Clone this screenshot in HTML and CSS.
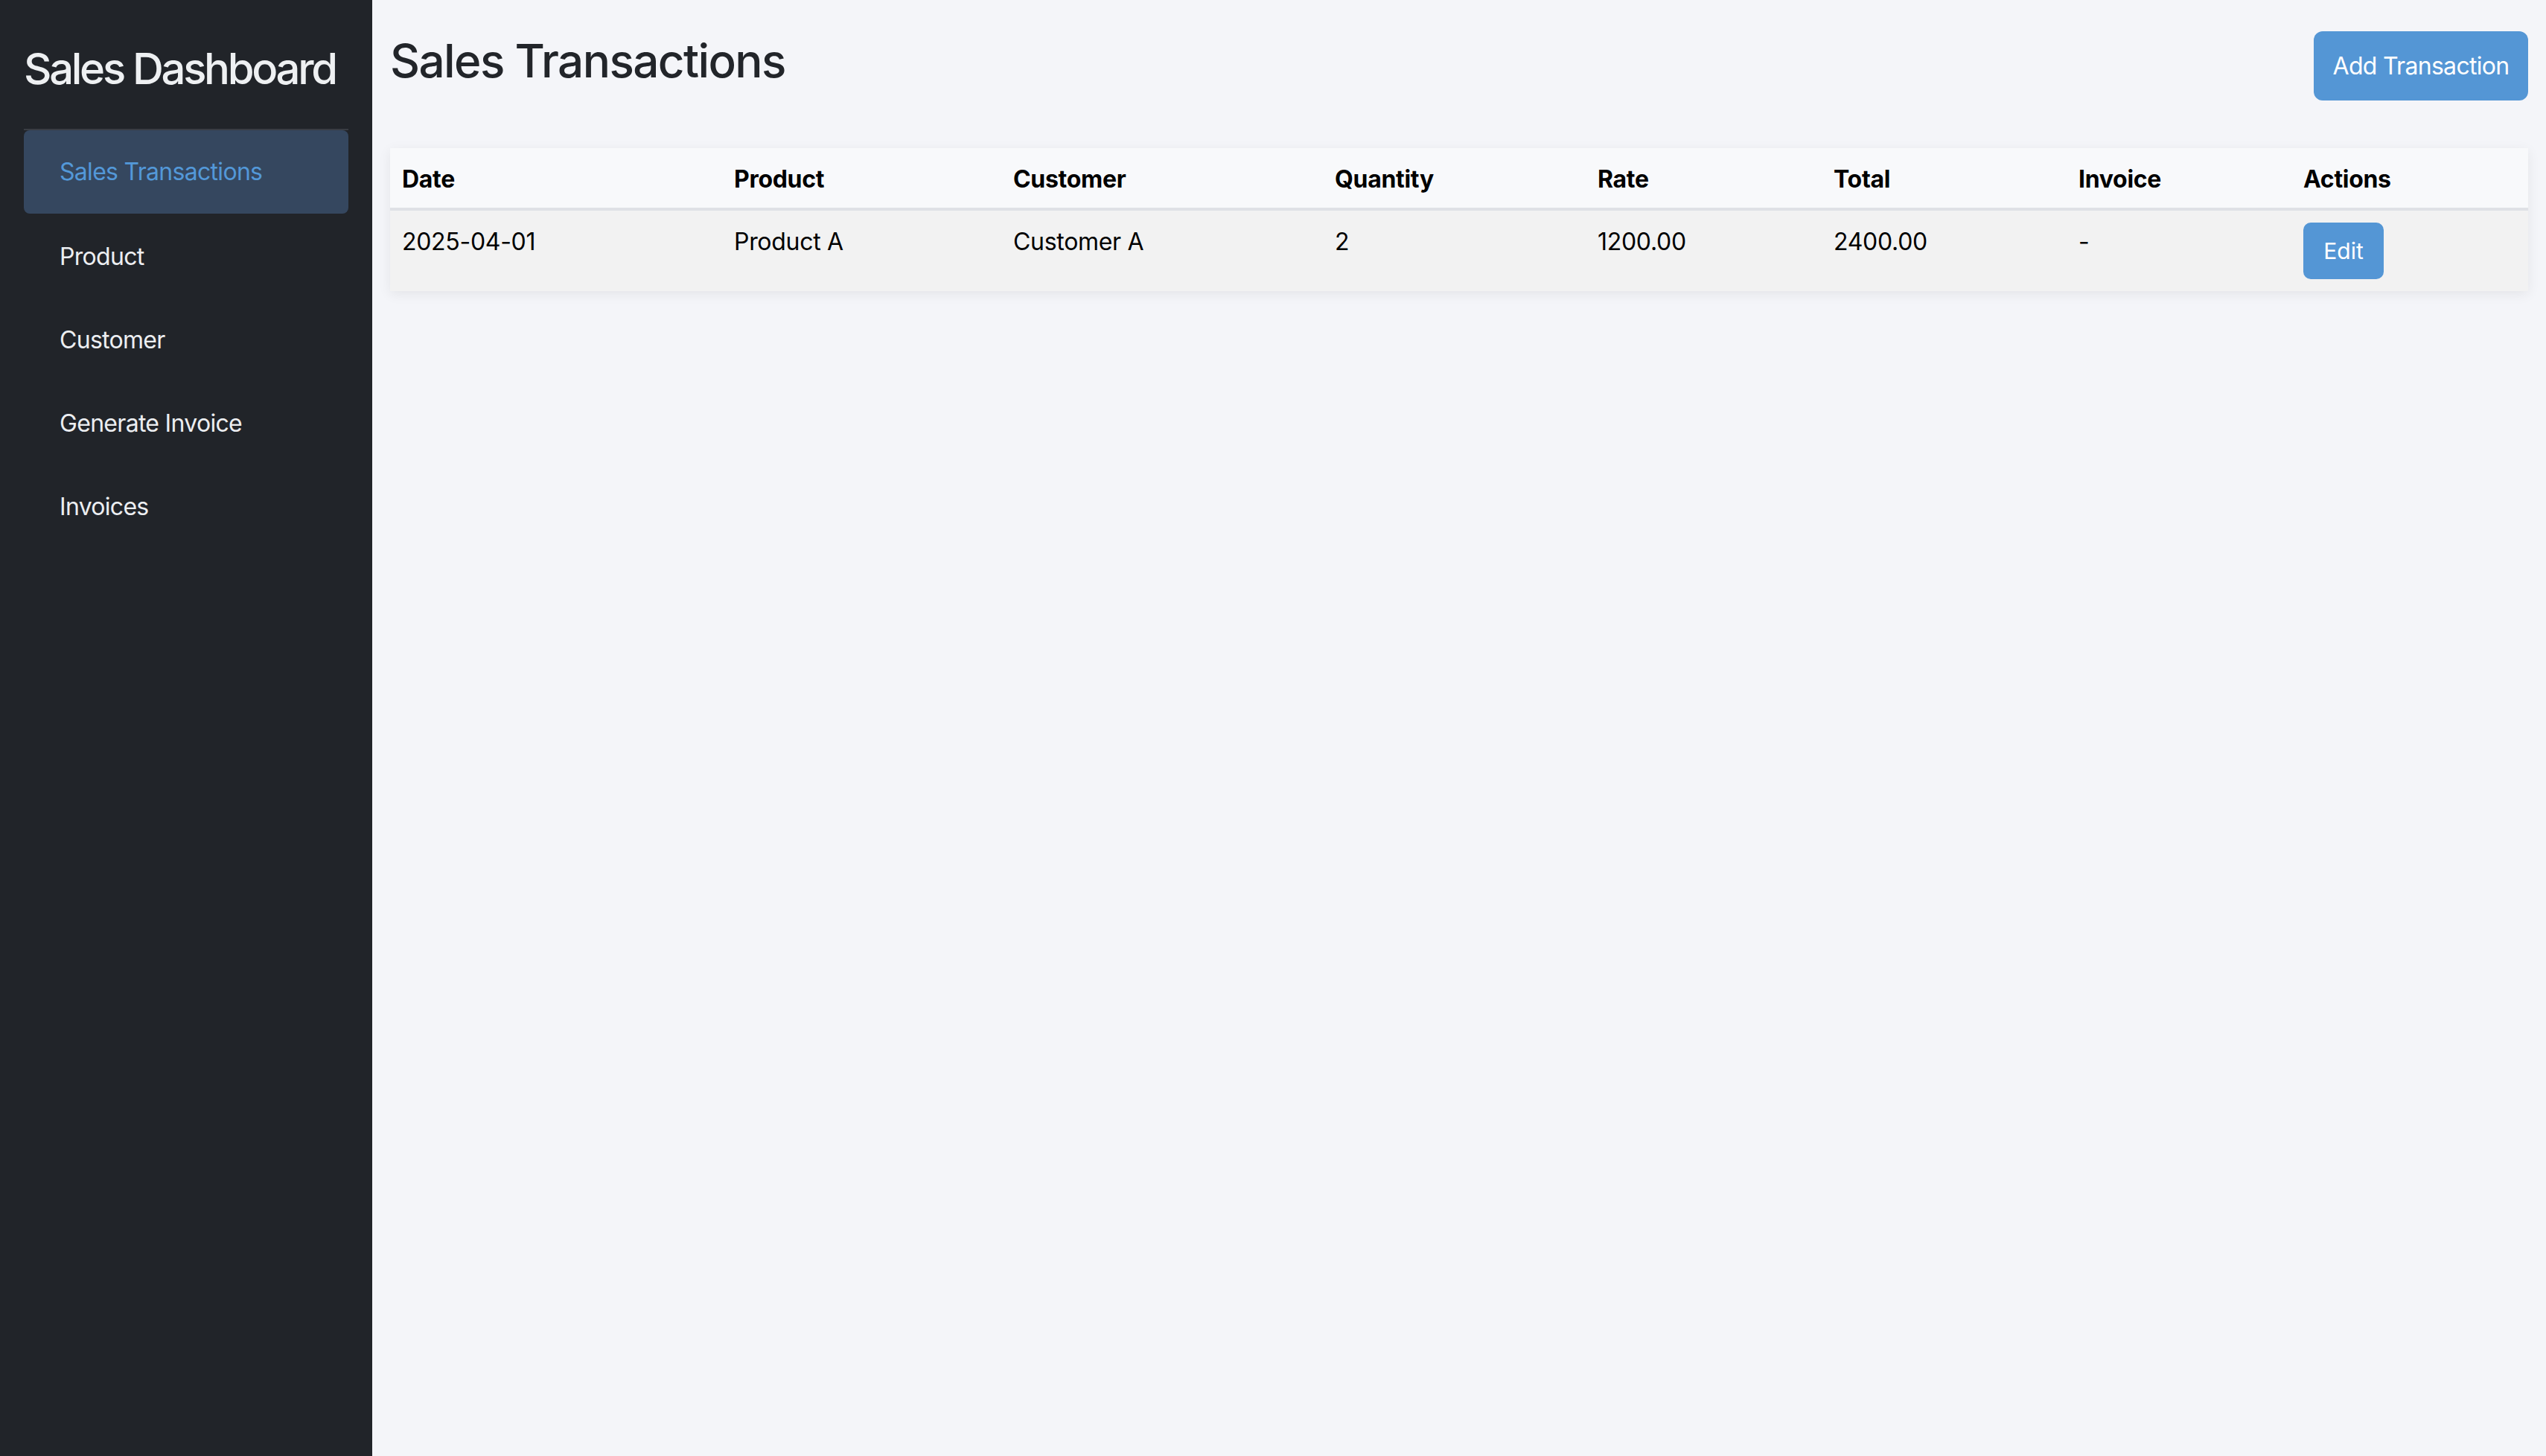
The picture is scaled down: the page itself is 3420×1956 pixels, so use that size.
FILE: index.html
```html
<!DOCTYPE html>
<html lang="en">
<head>
<meta charset="utf-8">
<title>Sales Dashboard</title>
<link rel="stylesheet" href="styles.css">
</head>
<body>
<div class="app">
  <aside class="sidebar">
    <h2 class="brand">Sales Dashboard</h2>
    <ul class="nav">
      <li class="nav-item active">Sales Transactions</li>
      <li class="nav-item">Product</li>
      <li class="nav-item">Customer</li>
      <li class="nav-item">Generate Invoice</li>
      <li class="nav-item">Invoices</li>
    </ul>
  </aside>
  <main class="main">
    <div class="page-header">
      <h1 class="page-title">Sales Transactions</h1>
      <button class="btn btn-add">Add Transaction</button>
    </div>
    <table class="tx-table">
      <colgroup>
        <col class="c-date"><col class="c-product"><col class="c-customer"><col class="c-qty">
        <col class="c-rate"><col class="c-total"><col class="c-invoice"><col class="c-actions">
      </colgroup>
      <thead>
        <tr>
          <th>Date</th><th>Product</th><th>Customer</th><th>Quantity</th>
          <th>Rate</th><th>Total</th><th>Invoice</th><th>Actions</th>
        </tr>
      </thead>
      <tbody>
        <tr>
          <td>2025-04-01</td><td>Product A</td><td>Customer A</td><td>2</td>
          <td>1200.00</td><td>2400.00</td><td>-</td>
          <td class="actions"><button class="btn btn-edit">Edit</button></td>
        </tr>
      </tbody>
    </table>
  </main>
</div>
</body>
</html>
```
FILE: styles.css
```css
html, body {
  margin: 0;
  padding: 0;
}
body {
  font-family: Inter, "Noto Sans", "Liberation Sans", sans-serif;
  background: #f4f5f9;
  color: #000;
}
.app {
  display: flex;
  min-height: 1956px;
}
.sidebar {
  width: 500px;
  flex: 0 0 500px;
  box-sizing: border-box;
  background: #212429;
  padding: 32px;
}
.brand {
  margin: 24px 0 45px 0;
  font-size: 58px;
  font-weight: 500;
  line-height: 72px;
  letter-spacing: -3.3px;
  color: #eef0f2;
  white-space: nowrap;
}
.nav {
  list-style: none;
  margin: 0;
  padding: 0;
  border-top: 2px solid #3a3d43;
}
.nav-item {
  box-sizing: border-box;
  height: 112px;
  padding: 36px 48px;
  font-size: 32px;
  line-height: 40px;
  letter-spacing: -0.7px;
  color: #eceef1;
  border-radius: 8px;
}
.nav-item.active {
  background: #35475f;
  color: #5398d8;
  margin-bottom: 2px;
}
.main {
  flex: 1;
  padding: 24px;
  min-width: 0;
}
.page-header {
  display: flex;
  justify-content: space-between;
  align-items: flex-start;
  margin-top: 18px;
}
.page-title {
  margin: 2px 0 0 0;
  font-size: 62px;
  font-weight: 500;
  line-height: 75px;
  letter-spacing: -1.6px;
  color: #22252a;
}
.btn {
  font-family: Inter, "Noto Sans", "Liberation Sans", sans-serif;
  border: none;
  background: #5496d5;
  color: #fff;
  cursor: pointer;
}
.btn-add {
  width: 288px;
  height: 93px;
  padding: 0;
  font-size: 32px;
  letter-spacing: -0.7px;
  border-radius: 12px;
}
.tx-table {
  width: 100%;
  margin-top: 64px;
  table-layout: fixed;
  border-collapse: collapse;
  box-shadow: 0 4px 16px rgba(0, 0, 0, 0.07);
}
.c-date { width: 446px; }
.c-product { width: 375px; }
.c-customer { width: 432px; }
.c-qty { width: 353px; }
.c-rate { width: 317px; }
.c-total { width: 329px; }
.c-invoice { width: 302px; }
.c-actions { width: 318px; }
.tx-table th {
  text-align: left;
  background: #f8f9fb;
  font-size: 32px;
  font-weight: 700;
  line-height: 40px;
  letter-spacing: -0.3px;
  padding: 22px 16px 18px;
  border-bottom: 4px solid #dfe1e6;
}
.tx-table td {
  background: #f2f2f2;
  font-size: 32px;
  line-height: 40px;
  letter-spacing: -0.3px;
  padding: 22px 16px 18px;
  vertical-align: top;
}
.tx-table td.actions {
  padding: 16px;
}
.btn-edit {
  width: 108px;
  height: 76px;
  padding: 0;
  font-size: 30px;
  border-radius: 10px;
}
```
